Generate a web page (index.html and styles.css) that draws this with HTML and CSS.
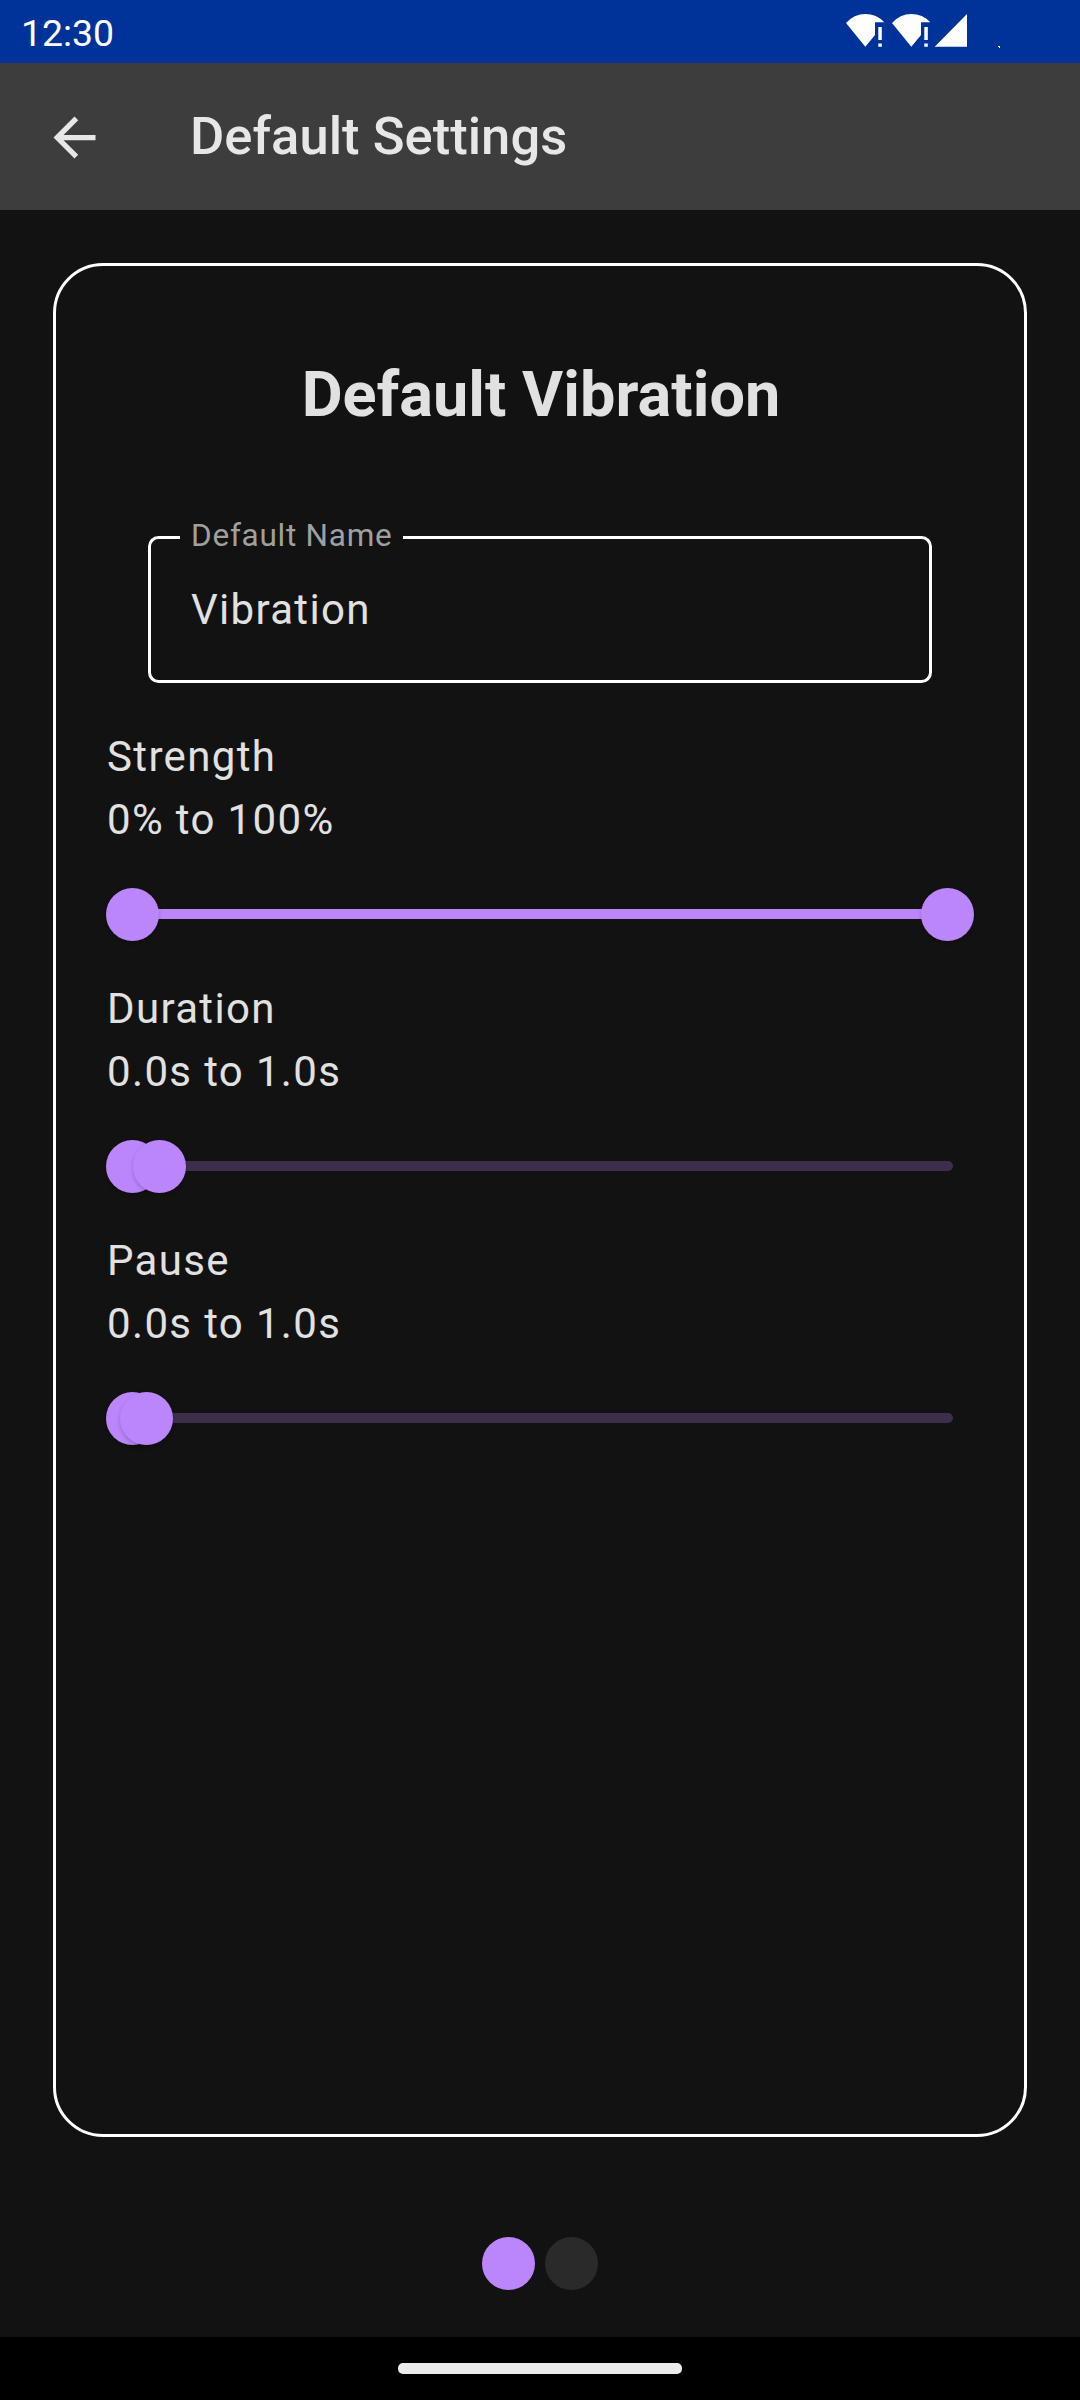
FILE: index.html
```html
<!DOCTYPE html>
<html lang="en">
<head>
<meta charset="utf-8">
<title>Default Settings</title>
<link rel="stylesheet" href="styles.css">
</head>
<body>
<div class="screen">
  <div class="status-bar">
    <span class="clock">12:30</span>
    <svg class="status-icons" width="160" height="63" viewBox="840 0 160 63" fill="#fff">
      <g id="wifi">
        <path d="M846 23Q854 14 865.3 14T884.3 22.3H875V35L865.3 46.8Z"/>
        <path d="M878.3 27h3.5v13h-3.5zM878.3 43.5h3.5v3.3h-3.5z"/>
      </g>
      <use href="#wifi" x="46"/>
      <path d="M934.7 46.8L967 14V46.8Z"/>
      <path d="M998 46h2v2h-1v-1h-1z"/>
    </svg>
  </div>
  <header class="app-bar">
    <svg class="back" viewBox="0 0 24 24" fill="#e7e7e7"><path d="M20 11H7.83l5.59-5.59L12 4l-8 8 8 8 1.41-1.41L7.83 13H20z"/></svg>
    <h1 class="app-title">Default Settings</h1>
  </header>
  <main class="content">
    <section class="card">
      <h2 class="card-title">Default Vibration</h2>
      <fieldset class="field">
        <legend class="field-label">Default Name</legend>
        <div class="field-value">Vibration</div>
      </fieldset>
      <div class="setting">
        <div class="line">Strength</div>
        <div class="line">0% to 100%</div>
        <div class="slider"><div class="track">
          <div class="active" style="width:100%"></div>
          <div class="thumb" style="left:0%"></div>
          <div class="thumb" style="left:100%"></div>
        </div></div>
      </div>
      <div class="setting">
        <div class="line">Duration</div>
        <div class="line">0.0s to 1.0s</div>
        <div class="slider"><div class="track">
          <div class="active" style="width:3.33%"></div>
          <div class="thumb" style="left:0%"></div>
          <div class="thumb" style="left:3.33%"></div>
        </div></div>
      </div>
      <div class="setting">
        <div class="line">Pause</div>
        <div class="line">0.0s to 1.0s</div>
        <div class="slider"><div class="track">
          <div class="active" style="width:1.67%"></div>
          <div class="thumb" style="left:0%"></div>
          <div class="thumb" style="left:1.67%"></div>
        </div></div>
      </div>
    </section>
    <div class="pager">
      <span class="dot dot-on"></span>
      <span class="dot"></span>
    </div>
  </main>
  <div class="nav-bar"><div class="pill"></div></div>
</div>
</body>
</html>
```
FILE: styles.css
```css
* { box-sizing: border-box; }
body {
  margin: 0;
  background: #121212;
  color: #e1e1e1;
  font-family: Roboto, sans-serif;
}
.screen {
  width: 1080px;
  height: 2400px;
  display: flex;
  flex-direction: column;
  overflow: hidden;
}
.status-bar {
  height: 63px;
  flex: none;
  display: flex;
  justify-content: space-between;
  padding: 0 80px 0 21px;
  background: #003399;
  color: #fff;
}
.clock { font-size: 37.4px; line-height: 66px; }
.app-bar {
  height: 147px;
  flex: none;
  display: flex;
  align-items: center;
  padding-left: 43px;
  background: #3d3d3d;
}
.back { width: 63px; height: 63px; margin-top: 1px; }
.app-title {
  margin: 0 0 2px 84px;
  font-size: 52.5px;
  font-weight: 500;
  line-height: 70px;
  letter-spacing: 0.04px;
  color: #e7e7e7;
}
.content {
  flex: 1;
  display: flex;
  flex-direction: column;
  padding: 53px 53px 47px;
}
.card {
  height: 1874px;
  padding: 87px 50px 0;
  border: 3px solid #fff;
  border-radius: 50px;
}
.card-title {
  margin: 0 0 81px;
  padding-left: 2px;
  font-size: 63px;
  font-weight: 700;
  line-height: 84px;
  letter-spacing: 0.04px;
  text-align: center;
}
.field {
  height: 165px;
  margin: 0 42px 42px;
  padding: 0 0 0 40px;
  border: 3px solid #fff;
  border-radius: 10.5px;
  display: block;
  min-width: 0;
}
.field-label {
  margin-left: -11px;
  padding: 0 10px 2px 11px;
  font-size: 31.5px;
  line-height: 36px;
  letter-spacing: 0.75px;
  color: #a0a0a0;
}
.field-value {
  font-size: 42px;
  line-height: 56px;
  letter-spacing: 1.31px;
  padding-top: 26px;
}
.line {
  padding-left: 1px;
  font-size: 42px;
  line-height: 63px;
  letter-spacing: 1.35px;
}
.slider {
  height: 126px;
  padding: 0 26.5px;
  display: flex;
  align-items: center;
}
.track {
  position: relative;
  flex: 1;
  height: 10.5px;
}
/* The rail's round caps reach past the first and last value. */
.track::before {
  content: "";
  position: absolute;
  inset: 0 -5.25px;
  border-radius: 5.25px;
  background: #3d2e4c;
}
.active { position: relative; height: 100%; background: #bb86fc; }
.thumb {
  position: absolute;
  top: 50%;
  width: 53px;
  height: 53px;
  margin: -26.5px 0 0 -26.5px;
  border-radius: 50%;
  background: #bb86fc;
  box-shadow: 0 2px 4px rgba(0, 0, 0, 0.2);
}
.pager {
  display: flex;
  justify-content: center;
  gap: 10px;
  margin-top: 100px;
}
.dot { width: 53px; height: 53px; border-radius: 50%; background: #2a2a2a; }
.dot-on { background: #bb86fc; }
.nav-bar {
  height: 63px;
  flex: none;
  display: flex;
  align-items: center;
  justify-content: center;
  background: #000;
}
.pill { width: 284px; height: 11px; border-radius: 5px; background: #ebebeb; }
```
